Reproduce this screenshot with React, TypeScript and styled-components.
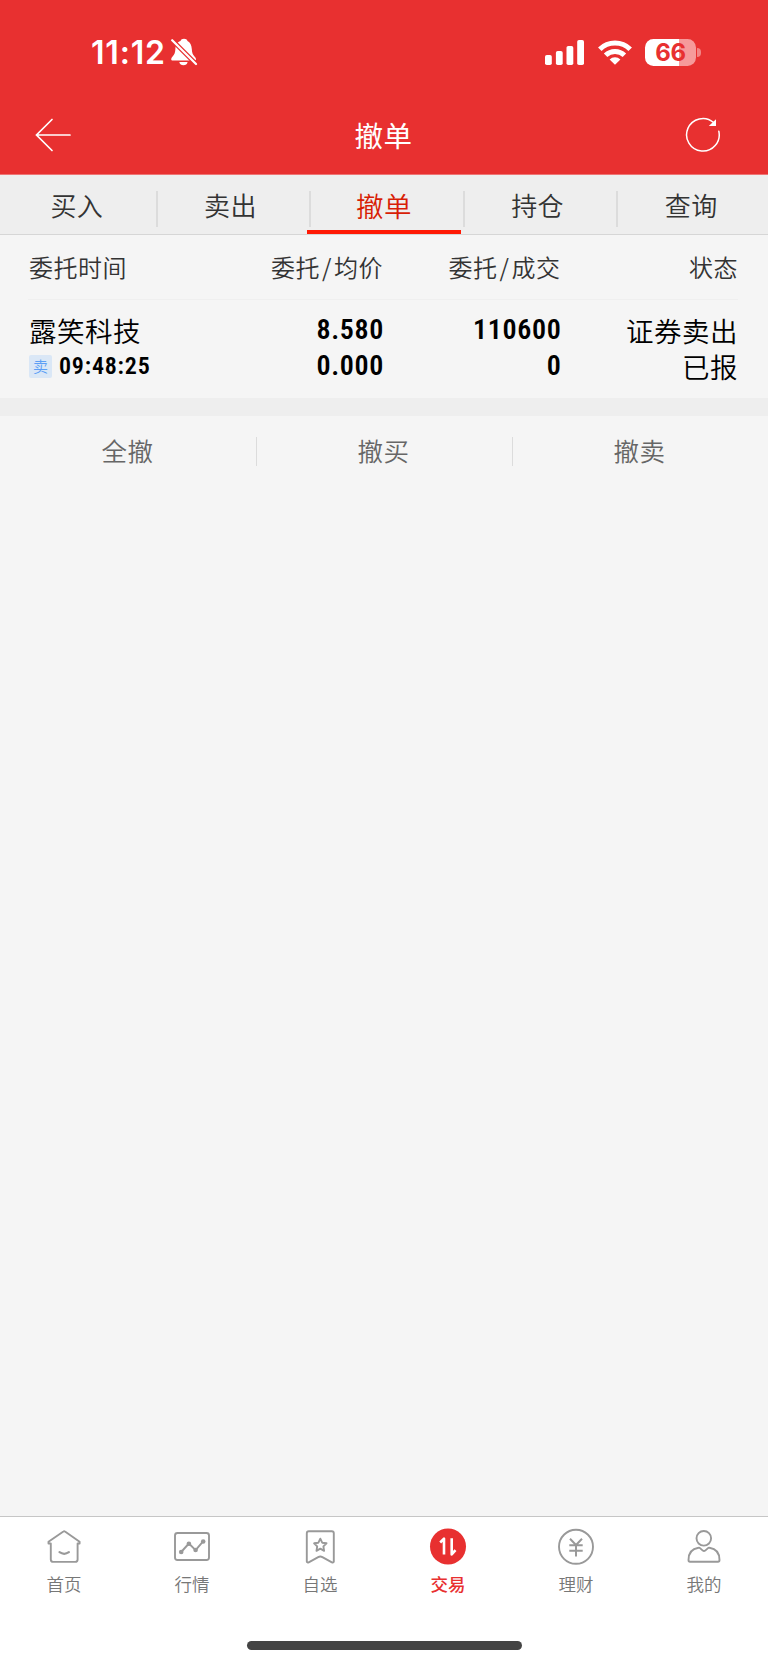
import React from "react";
import styled, { createGlobalStyle, css } from "styled-components";

const GlobalStyle = createGlobalStyle`
  * { box-sizing: border-box; }
  body {
    margin: 0;
    background: #f5f5f5;
    font-family: "Noto Sans CJK SC", sans-serif;
    font-weight: 350;
  }
`;

const Screen = styled.div`
  display: flex;
  flex-direction: column;
  width: 768px;
  height: 1665px;
  background: #f5f5f5;
  overflow: hidden;
`;

const Header = styled.header`
  display: flex;
  flex-direction: column;
  height: 175px;
  flex: none;
  background: #e83030;
  border-bottom: 1px solid #ee7474;
  color: #fff;
`;

const StatusBar = styled.div`
  display: flex;
  align-items: center;
  height: 104px;
  padding: 0 67px 0 90px;
`;

const Clock = styled.span`
  width: 81px;
  font-family: Inter, sans-serif;
  font-weight: 600;
  font-size: 32px;
  line-height: 40px;
  letter-spacing: 0.8px;
  padding: 1px 0 0 1px;
`;

const StatusIcons = styled.div`
  display: flex;
  align-items: center;
  gap: 14px;
  margin-left: auto;
`;

const Battery = styled.div`
  display: flex;
  align-items: center;
  gap: 1px;
  margin-left: -1px;
`;

const BatteryBody = styled.div`
  display: flex;
  align-items: center;
  justify-content: center;
  width: 51px;
  height: 27px;
  border-radius: 8.5px;
  background: linear-gradient(to right, #fff 66%, #f69a9a 66%);
  color: #e83030;
  font-family: Inter, sans-serif;
  font-size: 24px;
  font-weight: 700;
  line-height: 27px;
  letter-spacing: -0.4px;
`;

const BatteryTip = styled.div`
  width: 4px;
  height: 9px;
  border-radius: 0 4px 4px 0;
  background: #f28585;
`;

const TitleBar = styled.div`
  display: grid;
  grid-template-columns: 90px 1fr 90px;
  align-items: center;
  height: 63px;
`;

const Title = styled.h1`
  margin: 0;
  font-size: 28.5px;
  font-weight: 400;
  line-height: 40px;
  letter-spacing: 0.4px;
  text-align: center;
  padding: 0 1px 2px 0;
`;

const BarButton = styled.button`
  display: flex;
  justify-content: center;
  padding: 0 0 1px;
  border: 0;
  background: none;
  color: #fff;
`;

const BackButton = styled(BarButton)`
  padding-left: 16px;
`;

const RefreshButton = styled(BarButton)`
  padding-right: 41px;
`;

const Tabs = styled.nav`
  display: grid;
  grid-template-columns: repeat(5, 1fr);
  height: 60px;
  flex: none;
  background: #eee;
  border-bottom: 1px solid #d6d6d6;
`;

const Tab = styled.div<{ $active?: boolean }>`
  display: flex;
  align-items: center;
  position: relative;
  color: ${(p) => (p.$active ? "#d81e06" : "#333")};
  font-size: ${(p) => (p.$active ? "27.5px" : "26px")};

  &:not(:first-child)::before {
    content: "";
    flex: none;
    width: 2px;
    height: 36px;
    margin: 8px -4px 0 2px;
    background: #dcdcdc;
  }

  ${(p) =>
    p.$active &&
    css`
      &::after {
        content: "";
        position: absolute;
        inset: auto 0 0 0;
        height: 4px;
        background: #ff1a05;
      }
    `}
`;

const TabLabel = styled.span`
  flex: 1;
  line-height: 38px;
  letter-spacing: 0.4px;
  text-align: center;
  padding-top: 1px;
`;

const ColumnHeads = styled.div`
  display: grid;
  grid-template-columns: repeat(4, 1fr);
  height: 65px;
  margin: 0 30px 0 28px;
  border-bottom: 1px solid #efefef;
  color: #333;
  font-size: 24px;
  line-height: 64px;
  letter-spacing: 0.5px;
`;

const ColumnHead = styled.span`
  text-align: right;
  white-space: nowrap;
  &:first-child {
    text-align: left;
    padding-left: 1px;
  }
`;

const Slash = styled.span`
  margin: 0 2px;
`;

const Order = styled.div`
  display: grid;
  grid-template-columns: repeat(4, 1fr);
  height: 98px;
  margin: 0 30px 0 28px;
  color: #000;
`;

const Cell = styled.div`
  display: flex;
  flex-direction: column;
  align-items: flex-end;
  padding-top: 12px;
  &:first-child {
    align-items: flex-start;
    padding-left: 1px;
  }
`;

const Name = styled.span`
  height: 36px;
  font-family: Roboto, "Noto Sans CJK SC", sans-serif;
  font-size: 27.5px;
  line-height: 42px;
  letter-spacing: 0.5px;
  white-space: nowrap;
`;

const Figure = styled.span`
  height: 36px;
  margin-right: -1px;
  font-family: Roboto, sans-serif;
  font-size: 28px;
  font-stretch: 83%;
  font-weight: 570;
  line-height: 36px;
  letter-spacing: 0.65px;
`;

const TimeRow = styled.div`
  display: flex;
  align-items: center;
  gap: 7px;
  height: 36px;
`;

const SideBadge = styled.span`
  width: 23px;
  height: 23px;
  border-radius: 2px;
  background: #dae7f6;
  color: #5c9ff5;
  font-size: 15px;
  line-height: 22px;
  text-align: center;
`;

const Time = styled.span`
  font-family: Roboto, sans-serif;
  font-size: 24px;
  font-stretch: 83%;
  font-weight: 570;
  line-height: 34px;
  letter-spacing: 0.8px;
`;

const Band = styled.div`
  height: 18px;
  flex: none;
  background: #eee;
`;

const Actions = styled.div`
  display: grid;
  grid-template-columns: repeat(3, 1fr);
  align-items: center;
  height: 71px;
`;

const Action = styled.div`
  height: 29px;
  color: #666;
  font-size: 25.5px;
  line-height: 26px;
  letter-spacing: 0.4px;
  text-align: center;
  padding-right: 1px;
  & + & {
    border-left: 1px solid #dcdcdc;
    padding-right: 2px;
  }
`;

const BottomNav = styled.nav`
  display: grid;
  grid-template-columns: repeat(6, 1fr);
  grid-template-rows: 124px 10px;
  height: 149px;
  flex: none;
  margin-top: auto;
  border-top: 1px solid #c6c6c6;
  background: #fff;
`;

const NavItem = styled.div<{ $active?: boolean }>`
  display: flex;
  flex-direction: column;
  align-items: center;
  padding-top: 11px;
  color: ${(p) => (p.$active ? "#e83030" : "#999")};

  svg {
    display: block;
  }
`;

const NavLabel = styled.span<{ $active?: boolean }>`
  margin-top: 5px;
  color: ${(p) => (p.$active ? "#e83030" : "#777")};
  font-weight: ${(p) => (p.$active ? 500 : 350)};
  font-size: 17.5px;
  line-height: 26px;
`;

const HomeIndicator = styled.div`
  grid-column: 1 / -1;
  justify-self: center;
  width: 275px;
  height: 9px;
  border-radius: 5px;
  background: #444;
`;

const BellOff = () => (
  <svg width="27" height="28" viewBox="0 0 27 28">
    <path
      d="M13 .8c-1.800 0-3 .9-3.500 2.200C5.800 4.200 4.600 7 4.400 11c-.2 4-1 5.500-2.800 7.400C.6 19.500.2 20.400.2 21.200c0 .8.6 1.300 1.500 1.300h21.800c.9 0 1.500-.5 1.500-1.300 0-.9-.5-1.700-1.500-2.800-1.800-1.900-2.500-3.500-2.700-7.400C20.500 7 19.200 4.200 16.500 3 16 1.700 14.800.8 13 .8zM8.300 24h8.300c-.4 2.100-2 3.300-4.100 3.300S8.700 26.100 8.300 24z"
      fill="#fff"
    />
    <path d="M.5 1.500 25.500 26.500" stroke="#e83030" strokeWidth="4.600" />
    <path d="M1.200 2.200 25 26" stroke="#fff" strokeWidth="2.200" strokeLinecap="round" />
  </svg>
);

const Signal = () => (
  <svg width="39" height="25" viewBox="0 0 39 25" fill="#fff">
    <rect x="0" y="15" width="6.800" height="10" rx="1.800" />
    <rect x="10.900" y="11" width="6.800" height="14" rx="1.800" />
    <rect x="21.500" y="6" width="6.800" height="19" rx="1.800" />
    <rect x="32.200" y="0" width="6.800" height="25" rx="1.800" />
  </svg>
);

const Wifi = () => (
  <svg width="34" height="25" viewBox="0 0 34 25">
    <g fill="none" stroke="#fff" strokeWidth="5">
      <path d="M1.800 9.200a21.700 21.700 0 0 1 30.400 0" />
      <path d="M7.600 15.200a13.500 13.500 0 0 1 18.800 0" />
    </g>
    <path d="M17 24.800 11.600 19.500a7.700 7.700 0 0 1 10.800 0z" fill="#fff" />
  </svg>
);

const BackArrow = () => (
  <svg width="36" height="34" viewBox="0 0 36 34" fill="none" stroke="#fff" strokeWidth="1.700" strokeLinecap="round">
    <path d="M17 1.500 1.500 17 17 32.500M1.500 17H35" />
  </svg>
);

const Refresh = () => (
  <svg width="36" height="36" viewBox="0 0 36 36" fill="none" stroke="#fff" strokeWidth="1.500" strokeLinecap="round">
    <path d="M33.800 14.200A16.300 16.300 0 1 1 28.600 5.500" />
    <path d="M31 2.200v6.800h-7.200z" fill="#fff" stroke="none" />
  </svg>
);

const lineIcon = {
  width: 38,
  height: 38,
  viewBox: "0 0 38 38",
  fill: "none",
  stroke: "currentColor",
  strokeWidth: 1.9,
  strokeLinecap: "round" as const,
  strokeLinejoin: "round" as const,
};

const HomeIcon = () => (
  <svg {...lineIcon}>
    <path d="M5.800 15.500v16c0 1.600.8 2.400 2.400 2.400h22c1.600 0 2.400-.8 2.400-2.400v-16h2v-1.800L20 3.500q-.8-.6-1.600 0L3.500 13.700v1.800z" />
    <path d="M14.500 24.200q4.700 3.200 9.400 0" strokeWidth="2.200" />
  </svg>
);

const QuotesIcon = () => (
  <svg {...lineIcon}>
    <rect x="2" y="5" width="34" height="27" rx="2.500" />
    <path d="m8.200 24 7.700-8.500 6.700 6.700 7.700-9" />
    <g fill="currentColor" stroke="none">
      <circle cx="8.200" cy="24" r="2.300" />
      <circle cx="15.900" cy="15.700" r="2.300" />
      <circle cx="22.600" cy="22" r="2.300" />
      <circle cx="30.200" cy="13.500" r="2.300" />
    </g>
  </svg>
);

const WatchlistIcon = () => (
  <svg {...lineIcon}>
    <path d="M7.800 3.300h23c1.200 0 2 .8 2 2v28.200q-.3 1.500-1.900.8l-9.500-5.200q-2.100-1.100-4.200 0l-9.500 5.200q-1.600.7-1.900-.8V5.300c0-1.200.8-2 2-2z" />
    <path d="m19.300 10.700 1.900 4 4.300.6-3.100 3.100.7 4.400-3.800-2.100-3.800 2.100.7-4.400-3.100-3.100 4.300-.6z" />
  </svg>
);

const TradeIcon = () => (
  <svg {...lineIcon}>
    <circle cx="19" cy="18.500" r="18" fill="currentColor" stroke="none" />
    <path d="m11.200 14.500 3.800-3.800v15.800M22.700 10.200v16.200l3.800-4.300" stroke="#fff" strokeWidth="2.600" strokeLinecap="butt" />
  </svg>
);

const WealthIcon = () => (
  <svg {...lineIcon}>
    <circle cx="19" cy="18.800" r="17" />
    <path d="m13 10.800 6 6.200 6-6.200M12.300 17.200h13.400M12.300 22.700h13.400M19 17v11.500" strokeWidth="2" strokeLinecap="butt" />
  </svg>
);

const ProfileIcon = () => (
  <svg {...lineIcon}>
    <circle cx="18.800" cy="10.300" r="7.300" />
    <path d="M13.500 19.800q.8-.3 1.500.3l2.800 2.500q1.200 1 2.400 0L23 20.100q.7-.6 1.500-.3C31 20.800 34.500 25.500 34.500 32q0 1.700-1.500 1.700H5q-1.500 0-1.500-1.700c0-6.500 3.500-11.200 10-12.200z" />
  </svg>
);

const tabs = ["买入", "卖出", "撤单", "持仓", "查询"];
const heads = [["委托时间"], ["委托", "均价"], ["委托", "成交"], ["状态"]];
const actions = ["全撤", "撤买", "撤卖"];
const navItems = [
  { label: "首页", Icon: HomeIcon },
  { label: "行情", Icon: QuotesIcon },
  { label: "自选", Icon: WatchlistIcon },
  { label: "交易", Icon: TradeIcon },
  { label: "理财", Icon: WealthIcon },
  { label: "我的", Icon: ProfileIcon },
];

export default function App() {
  return (
    <Screen>
      <GlobalStyle />
      <Header>
        <StatusBar>
          <Clock>11:12</Clock>
          <BellOff />
          <StatusIcons>
            <Signal />
            <Wifi />
            <Battery>
              <BatteryBody>66</BatteryBody>
              <BatteryTip />
            </Battery>
          </StatusIcons>
        </StatusBar>
        <TitleBar>
          <BackButton aria-label="返回">
            <BackArrow />
          </BackButton>
          <Title>撤单</Title>
          <RefreshButton aria-label="刷新">
            <Refresh />
          </RefreshButton>
        </TitleBar>
      </Header>
      <Tabs>
        {tabs.map((tab) => (
          <Tab key={tab} $active={tab === "撤单"}>
            <TabLabel>{tab}</TabLabel>
          </Tab>
        ))}
      </Tabs>
      <ColumnHeads>
        {heads.map(([first, second]) => (
          <ColumnHead key={first + second}>
            {first}
            {second && (
              <>
                <Slash>/</Slash>
                {second}
              </>
            )}
          </ColumnHead>
        ))}
      </ColumnHeads>
      <Order>
        <Cell>
          <Name>露笑科技</Name>
          <TimeRow>
            <SideBadge>卖</SideBadge>
            <Time>09:48:25</Time>
          </TimeRow>
        </Cell>
        <Cell>
          <Figure>8.580</Figure>
          <Figure>0.000</Figure>
        </Cell>
        <Cell>
          <Figure>110600</Figure>
          <Figure>0</Figure>
        </Cell>
        <Cell>
          <Name>证券卖出</Name>
          <Name>已报</Name>
        </Cell>
      </Order>
      <Band />
      <Actions>
        {actions.map((action) => (
          <Action key={action}>{action}</Action>
        ))}
      </Actions>
      <BottomNav>
        {navItems.map(({ label, Icon }) => (
          <NavItem key={label} $active={label === "交易"}>
            <Icon />
            <NavLabel $active={label === "交易"}>{label}</NavLabel>
          </NavItem>
        ))}
        <HomeIndicator />
      </BottomNav>
    </Screen>
  );
}
